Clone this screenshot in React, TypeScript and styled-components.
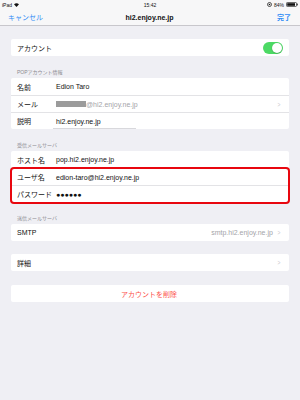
import styled, { createGlobalStyle } from "styled-components";

const GlobalStyle = createGlobalStyle`
	html, body {
		margin: 0;
		padding: 0;
		background: #efeff4;
	}
	body {
		font-family: "Liberation Sans", "Noto Sans CJK JP", sans-serif;
		-webkit-font-smoothing: antialiased;
	}
`;

const Screen = styled.div`
	width: 300px;
	height: 400px;
	background: #efeff4;
	display: flex;
	flex-direction: column;
	overflow: hidden;
`;

const StatusBar = styled.div`
	height: 9px;
	background: #f7f7f8;
	display: grid;
	grid-template-columns: 1fr auto 1fr;
	align-items: center;
	padding: 0 2px;
	font-size: 5px;
	color: #111;
`;

const StatusSide = styled.div<{ $right?: boolean }>`
	display: flex;
	align-items: center;
	gap: 2px;
	justify-content: ${(p) => (p.$right ? "flex-end" : "flex-start")};
`;

const NavBar = styled.div`
	height: 16px;
	background: #f7f7f8;
	border-bottom: 1px solid #c8c7cc;
	display: grid;
	grid-template-columns: 1fr auto 1fr;
	align-items: center;
	padding: 0 9px 0 8px;
	font-size: 7px;
`;

const NavButton = styled.span<{ $bold?: boolean; $right?: boolean }>`
	color: #2f8cf6;
	font-weight: ${(p) => (p.$bold ? 700 : 400)};
	justify-self: ${(p) => (p.$right ? "end" : "start")};
`;

const NavTitle = styled.span`
	font-weight: 700;
	color: #111;
`;

const Content = styled.div`
	display: flex;
	flex-direction: column;
	padding: 13px 11px 0;
`;

const SectionHeader = styled.div`
	height: 12px;
	line-height: 12px;
	padding-left: 6px;
	font-size: 5px;
	color: #8a8a8f;
	margin-top: 10px;
`;

const Card = styled.div<{ $gap?: number }>`
	background: #fff;
	border-radius: 2px;
	margin-top: ${(p) => p.$gap ?? 0}px;
	display: flex;
	flex-direction: column;
`;

const Row = styled.div<{ $divider?: boolean; $center?: boolean }>`
	box-sizing: border-box;
	height: 17px;
	display: flex;
	align-items: center;
	justify-content: ${(p) => (p.$center ? "center" : "flex-start")};
	padding: 0 8px 0 6px;
	border-top: ${(p) => (p.$divider ? "1px solid #e3e3e6" : "none")};
	font-size: 7px;
	color: #111;
`;

const Label = styled.span`
	width: 39px;
	flex-shrink: 0;
`;

const Value = styled.span<{ $muted?: boolean }>`
	flex: 1;
	color: ${(p) => (p.$muted ? "#a4a4a8" : "#111")};
	display: flex;
	align-items: center;
`;

const Detail = styled.span`
	margin-left: auto;
	margin-right: 4px;
	color: #a4a4a8;
`;

const Chevron = styled.span<{ $inline?: boolean }>`
	margin-left: ${(p) => (p.$inline ? "0" : "auto")};
	color: #c7c7cc;
	font-size: 7px;
	transform: scaleX(0.7);
`;

const Redacted = styled.span`
	display: inline-block;
	width: 30px;
	height: 6px;
	background: #9b9b9b;
`;

const Underline = styled.div`
	height: 1px;
	margin: -1px 0 0 42px;
	width: 83px;
	background: #d8d8dc;
`;

const Highlight = styled.div`
	position: relative;
`;

const HighlightFrame = styled.div`
	position: absolute;
	top: -1px;
	left: -1px;
	right: -1px;
	bottom: -2px;
	border: 2px solid #e8070f;
	border-radius: 4px;
	pointer-events: none;
`;

const Toggle = styled.span`
	margin-left: auto;
	margin-right: -2px;
	width: 20px;
	height: 12px;
	border-radius: 6px;
	background: #4cd964;
	position: relative;
	&::after {
		content: "";
		position: absolute;
		top: 1px;
		right: 1px;
		width: 10px;
		height: 10px;
		border-radius: 50%;
		background: #fff;
		box-shadow: 0 0.5px 1px rgba(0, 0, 0, 0.3);
	}
`;

const DeleteText = styled.span`
	color: #fc4f49;
`;

function Wifi() {
	return (
		<svg width="5" height="4" viewBox="0 0 10 8">
			<path d="M5 8 L0 2.5 Q5 -1.5 10 2.5 Z" fill="#111" />
		</svg>
	);
}

function Battery() {
	return (
		<svg width="12" height="5" viewBox="0 0 12 5">
			<rect x="0.5" y="0.5" width="10" height="4" rx="0.8" fill="none" stroke="#111" strokeWidth="0.6" />
			<rect x="1.2" y="1.2" width="7.8" height="2.6" fill="#111" />
			<rect x="10.8" y="1.6" width="0.9" height="1.8" fill="#111" />
		</svg>
	);
}

function Lock() {
	return (
		<svg width="5" height="5" viewBox="0 0 10 10">
			<circle cx="5" cy="5" r="4" fill="none" stroke="#111" strokeWidth="1.4" />
			<circle cx="5" cy="5" r="1.6" fill="#111" />
		</svg>
	);
}

export default function App() {
	return (
		<>
			<GlobalStyle />
			<Screen>
				<StatusBar>
					<StatusSide>
						<span>iPad</span>
						<Wifi />
					</StatusSide>
					<span>15:42</span>
					<StatusSide $right>
						<Lock />
						<span>84%</span>
						<Battery />
					</StatusSide>
				</StatusBar>
				<NavBar>
					<NavButton>キャンセル</NavButton>
					<NavTitle>hi2.enjoy.ne.jp</NavTitle>
					<NavButton $bold $right>
						完了
					</NavButton>
				</NavBar>
				<Content>
					<Card>
						<Row>
							アカウント
							<Toggle />
						</Row>
					</Card>

					<SectionHeader>POPアカウント情報</SectionHeader>
					<Card>
						<Row>
							<Label>名前</Label>
							<Value>Edion Taro</Value>
						</Row>
						<Row $divider>
							<Label>メール</Label>
							<Value $muted>
								<Redacted />
								@hi2.enjoy.ne.jp
							</Value>
							<Chevron>&gt;</Chevron>
						</Row>
						<Row $divider>
							<Label>説明</Label>
							<Value>hi2.enjoy.ne.jp</Value>
						</Row>
						<Underline />
					</Card>

					<SectionHeader>受信メールサーバ</SectionHeader>
					<Card>
						<Row>
							<Label>ホスト名</Label>
							<Value>pop.hi2.enjoy.ne.jp</Value>
						</Row>
						<Highlight>
							<Row $divider>
								<Label>ユーザ名</Label>
								<Value>edion-taro@hi2.enjoy.ne.jp</Value>
							</Row>
							<Row $divider>
								<Label>パスワード</Label>
								<Value>●●●●●●</Value>
							</Row>
							<HighlightFrame />
						</Highlight>
					</Card>

					<SectionHeader>送信メールサーバ</SectionHeader>
					<Card>
						<Row>
							SMTP
							<Detail>smtp.hi2.enjoy.ne.jp</Detail>
							<Chevron $inline>&gt;</Chevron>
						</Row>
					</Card>

					<Card $gap={13}>
						<Row>
							詳細
							<Chevron>&gt;</Chevron>
						</Row>
					</Card>

					<Card $gap={14}>
						<Row $center>
							<DeleteText>アカウントを削除</DeleteText>
						</Row>
					</Card>
				</Content>
			</Screen>
		</>
	);
}
